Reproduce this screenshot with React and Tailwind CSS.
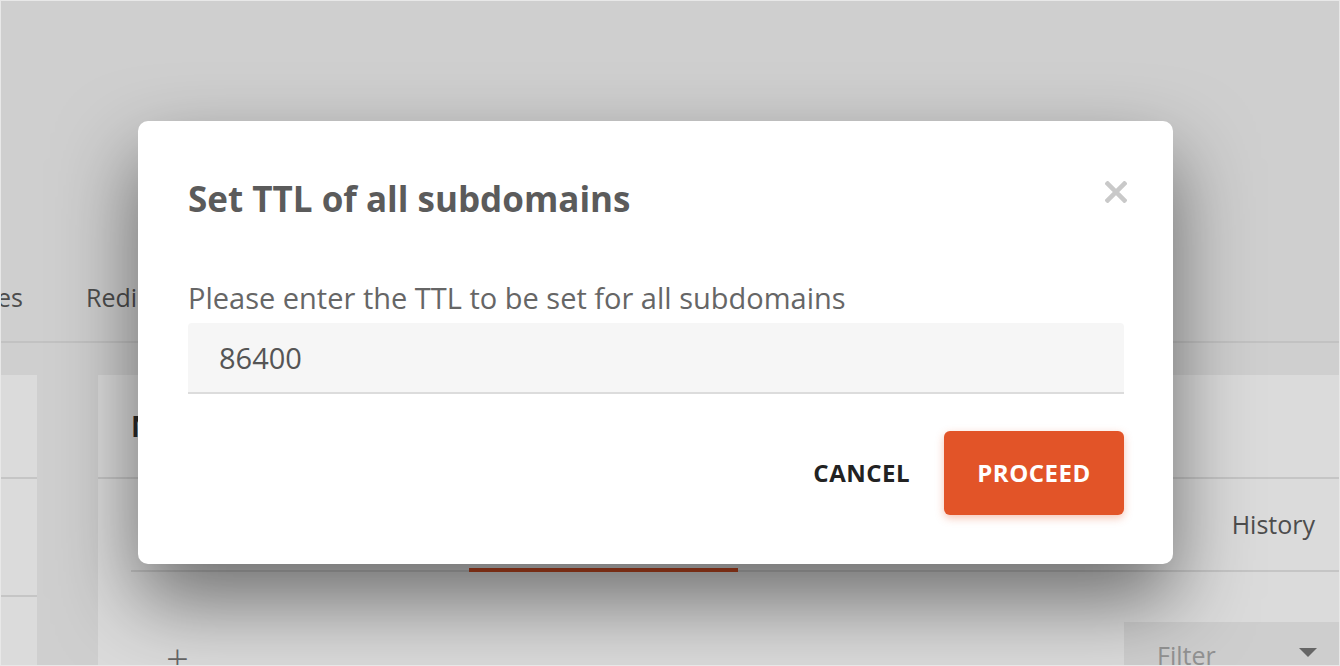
import { useState } from "react";

const font = { fontFamily: '"Open Sans", "Noto Sans", sans-serif' };

const BackgroundPage = () => {
    return (
        <div className="flex h-full w-full flex-col bg-[#f2f2f2]">
            <div className="h-[270px] shrink-0" />
            <div className="flex h-[72px] shrink-0 items-center gap-[63px] border-b-2 border-[#e2e2e2] pb-[16px] text-[25px] text-[#5a5a5a]">
                <div className="flex w-[22px] justify-end whitespace-nowrap">
                    <span>Services</span>
                </div>
                <span>Redirects</span>
            </div>
            <div className="mt-[32px] flex min-h-0 flex-1 gap-[61px]">
                <div className="flex w-[36px] flex-col bg-white">
                    <div className="h-[104px] shrink-0 border-b-2 border-[#e6e6e6]" />
                    <div className="h-[118px] shrink-0 border-b-2 border-[#e6e6e6]" />
                </div>
                <div className="flex flex-1 flex-col bg-white">
                    <div className="flex h-[104px] shrink-0 items-center border-b-2 border-[#e6e6e6] px-[33px] text-[28px] font-bold text-[#333]">
                        Nameservers
                    </div>
                    <div className="ml-[33px] flex h-[93px] shrink-0 items-center border-b-2 border-[#e6e6e6]">
                        <div className="ml-[338px] mb-[-4px] h-full w-[269px] border-b-4 border-[#e25428]" />
                        <span className="ml-auto mr-[24px] text-[25px] text-[#5a5a5a]">History</span>
                    </div>
                    <div className="flex shrink-0 items-start justify-between pl-[68px]">
                        <span className="mt-[66px] text-[40px] leading-none font-extralight text-[#777]">+</span>
                        <div className="mt-[50px] flex h-[44px] w-[215px] items-center justify-between bg-[#f0f0f0] pl-[33px] pr-[22px] text-[25px] text-[#aaa]">
                            <span className="translate-y-[12px]">Filter</span>
                            <span className="translate-y-[8px] h-0 w-0 border-x-[9px] border-t-[9px] border-x-transparent border-t-[#777]" />
                        </div>
                    </div>
                </div>
            </div>
        </div>
    );
};

const App = () => {
    const [ttl, setTtl] = useState("86400");

    return (
        <div style={font} className="relative h-[666px] w-full overflow-hidden border border-[#e8e8e8]">
            <BackgroundPage />
            <div className="absolute inset-0 bg-black/[0.14]" />
            <div className="absolute left-[137px] top-[120px] flex w-[1035px] flex-col rounded-[10px] bg-white pb-[49px] pl-[50px] pr-[49px] pt-[56px] shadow-[0_36px_80px_rgba(0,0,0,0.5)]">
                <div className="flex items-start justify-between">
                    <h2 className="text-[35px] font-bold leading-[44px] text-[#5b5b5b]">Set TTL of all subdomains</h2>
                    <button className="mr-[-3px] mt-[4px] text-[#c9c9c9]" aria-label="Close">
                        <svg width="22" height="22" viewBox="0 0 22 22">
                            <path d="M1 1L21 21M21 1L1 21" stroke="currentColor" strokeWidth="4.5" strokeLinecap="butt" />
                        </svg>
                    </button>
                </div>
                <label className="mt-[57px] text-[29px] leading-[40px] text-[#666]">
                    Please enter the TTL to be set for all subdomains
                </label>
                <input
                    value={ttl}
                    onChange={(e) => setTtl(e.target.value)}
                    className="mt-[5px] h-[71px] w-full rounded-t-[4px] border-b-2 border-[#dcdcdc] bg-[#f6f6f6] px-[31px] text-[29px] text-[#555] outline-none"
                />
                <div className="mt-[37px] flex items-center justify-end gap-[34px]">
                    <button className="text-[24px] font-bold tracking-[0.5px] text-[#222]">CANCEL</button>
                    <button className="h-[84px] w-[180px] rounded-[6px] bg-[#e25428] text-[24px] font-bold tracking-[0.5px] text-white shadow-[0_3px_8px_rgba(226,84,40,0.35)]">
                        PROCEED
                    </button>
                </div>
            </div>
        </div>
    );
};

export default App;
